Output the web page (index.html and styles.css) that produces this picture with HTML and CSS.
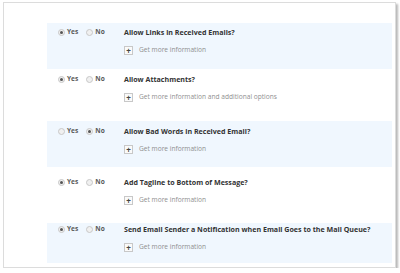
FILE: index.html
```html
<!DOCTYPE html>
<html>
<head>
<meta charset="utf-8">
<link rel="stylesheet" href="styles.css">
</head>
<body>
<div class="card">
  <div class="row row-blue r1">
    <div class="choice">
      <span class="opt"><span class="radio on"></span><span class="lbl">Yes</span></span>
      <span class="opt"><span class="radio"></span><span class="lbl">No</span></span>
    </div>
    <div class="content">
      <div class="title">Allow Links in Received Emails?</div>
      <div class="more"><span class="plus">+</span><span class="more-text">Get more information</span></div>
    </div>
  </div>
  <div class="row r2">
    <div class="choice">
      <span class="opt"><span class="radio on"></span><span class="lbl">Yes</span></span>
      <span class="opt"><span class="radio"></span><span class="lbl">No</span></span>
    </div>
    <div class="content">
      <div class="title">Allow Attachments?</div>
      <div class="more"><span class="plus">+</span><span class="more-text">Get more information and additional options</span></div>
    </div>
  </div>
  <div class="row row-blue r3">
    <div class="choice">
      <span class="opt"><span class="radio"></span><span class="lbl">Yes</span></span>
      <span class="opt"><span class="radio on"></span><span class="lbl">No</span></span>
    </div>
    <div class="content">
      <div class="title">Allow Bad Words in Received Email?</div>
      <div class="more"><span class="plus">+</span><span class="more-text">Get more information</span></div>
    </div>
  </div>
  <div class="row r4">
    <div class="choice">
      <span class="opt"><span class="radio on"></span><span class="lbl">Yes</span></span>
      <span class="opt"><span class="radio"></span><span class="lbl">No</span></span>
    </div>
    <div class="content">
      <div class="title">Add Tagline to Bottom of Message?</div>
      <div class="more"><span class="plus">+</span><span class="more-text">Get more information</span></div>
    </div>
  </div>
  <div class="row row-blue r5">
    <div class="choice">
      <span class="opt"><span class="radio on"></span><span class="lbl">Yes</span></span>
      <span class="opt"><span class="radio"></span><span class="lbl">No</span></span>
    </div>
    <div class="content">
      <div class="title">Send Email Sender a Notification when Email Goes to the Mail Queue?</div>
      <div class="more"><span class="plus">+</span><span class="more-text">Get more information</span></div>
    </div>
  </div>
</div>
</body>
</html>
```
FILE: styles.css
```css
html, body {
  margin: 0;
  padding: 0;
  background: #fff;
}
body {
  font-family: "Open Sans", "DejaVu Sans", sans-serif;
  color: #333;
}
.card {
  box-sizing: border-box;
  margin: 2px 0 0 3px;
  width: 393px;
  height: 266px;
  border: 1px solid #dcdcdc;
  box-shadow: 2px 2px 2px rgba(0, 0, 0, 0.28);
  background: #fff;
  padding: 20px 3px 0 43px;
}
.row {
  display: flex;
  align-items: flex-start;
}
.row-blue {
  background: #f0f7fe;
}
.r1 { padding: 4px 0 13px; }
.r2 { padding: 5px 0 18px; }
.r3 { padding: 5px 0 12px; }
.r4 { padding: 10px 0 17px; }
.r5 { padding: 1px 0 10px; }
.choice {
  width: 66px;
  padding-left: 11px;
  display: flex;
  gap: 8px;
  height: 10px;
  align-items: center;
}
.opt {
  display: flex;
  align-items: center;
  gap: 2px;
}
.radio {
  box-sizing: border-box;
  width: 7px;
  height: 7px;
  border-radius: 50%;
  border: 1px solid #c8c8c8;
  background: #f0f0f0;
  display: flex;
  align-items: center;
  justify-content: center;
}
.radio.on::after {
  content: "";
  width: 3px;
  height: 3px;
  border-radius: 50%;
  background: #555;
}
.lbl {
  font-size: 6.6px;
  font-weight: 700;
  color: #5a5a5a;
  line-height: 10px;
}
.content {
  display: flex;
  flex-direction: column;
  gap: 7px;
}
.title {
  font-size: 7.1px;
  font-weight: 700;
  line-height: 10px;
  color: #333;
}
.more {
  display: flex;
  align-items: center;
  gap: 6px;
  height: 12px;
}
.plus {
  box-sizing: border-box;
  width: 9px;
  height: 9px;
  border: 1px solid #c8c8c8;
  background: #fafafa;
  font-size: 8px;
  line-height: 7px;
  font-weight: 700;
  color: #444;
  text-align: center;
}
.more-text {
  font-size: 6.6px;
  color: #8f8f8f;
  line-height: 10px;
}
```
